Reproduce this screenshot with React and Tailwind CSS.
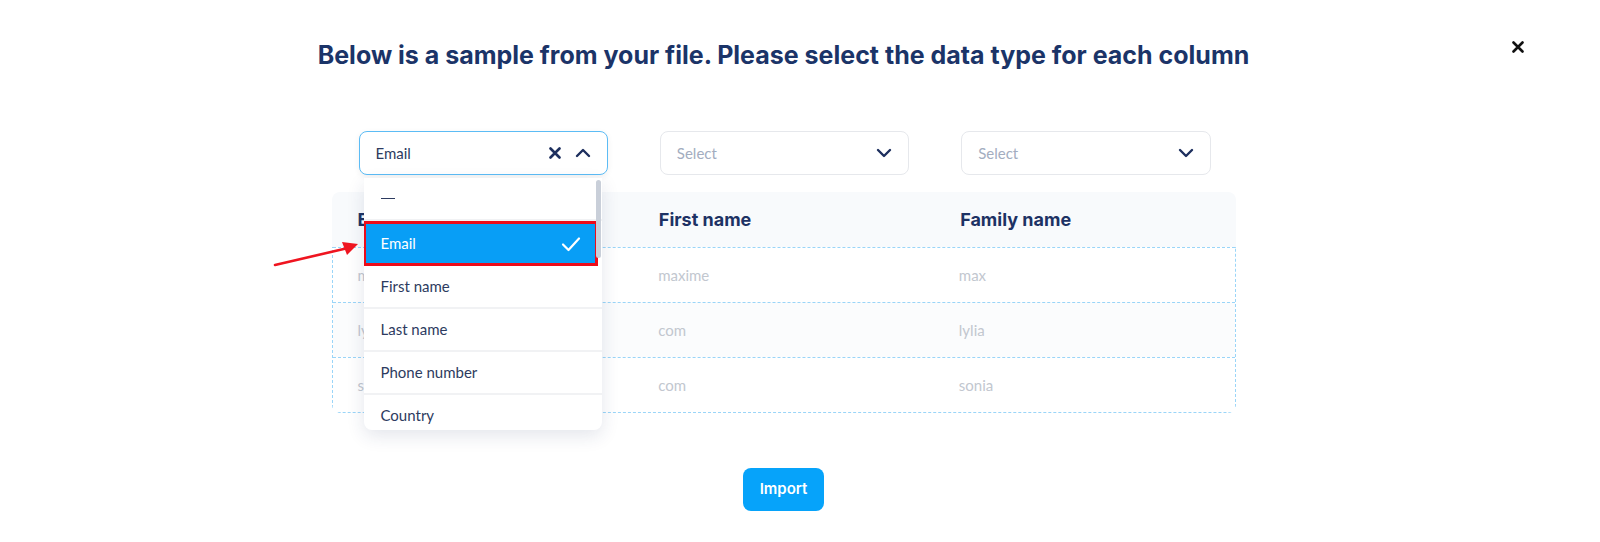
import React from 'react';

const columns = ['Email', 'First name', 'Family name'];

const rows = [
    ['maxime@gmail.com', 'maxime', 'max'],
    ['lylia@gmail.com', 'com', 'lylia'],
    ['sonia@gmail.com', 'com', 'sonia'],
];

const options = ['—', 'Email', 'First name', 'Last name', 'Phone number', 'Country'];

const ChevronDown = () => (
    <svg width="16" height="10" viewBox="0 0 16 10" fill="none">
        <path d="M2 2l6 6 6-6" stroke="#1d2f5e" strokeWidth="2.4" strokeLinecap="round" strokeLinejoin="round" />
    </svg>
);

const ChevronUp = () => (
    <svg width="16" height="10" viewBox="0 0 16 10" fill="none">
        <path d="M2 8l6-6 6 6" stroke="#1d2f5e" strokeWidth="2.4" strokeLinecap="round" strokeLinejoin="round" />
    </svg>
);

const Cross = ({ size = 12, color = '#1d2f5e', width = 2.6 }) => (
    <svg width={size} height={size} viewBox="0 0 12 12" fill="none">
        <path d="M1.5 1.5l9 9M10.5 1.5l-9 9" stroke={color} strokeWidth={width} strokeLinecap="round" />
    </svg>
);

const Check = () => (
    <svg width="20" height="16" viewBox="0 0 20 16" fill="none">
        <path d="M2 8.5l5.5 5.5L18 2.5" stroke="#ffffff" strokeWidth="2.2" strokeLinecap="round" strokeLinejoin="round" />
    </svg>
);

const Dropdown = () => (
    <div className="absolute left-[5px] top-[47px] w-[238px] h-[252px] bg-white rounded-b-lg shadow-[0_6px_18px_rgba(30,50,100,0.12)] overflow-hidden z-20">
        {options.map((opt) =>
            opt === 'Email' ? (
                <div
                    key={opt}
                    className="h-[45px] -ml-[1px] mr-[4px] border-[3px] border-[#ec0c1a] bg-[#089ef6] flex items-center justify-between pl-[15px] pr-[14px] text-white text-[15px]"
                >
                    <span>{opt}</span>
                    <Check />
                </div>
            ) : (
                <div
                    key={opt}
                    className="h-[43px] border-b-2 border-[#f1f2f4] flex items-center pl-[17px] text-[15px] text-[#2d3b60]"
                >
                    {opt === '—' ? <span className="inline-block w-[14px] h-[1.5px] bg-[#2d3b60]" /> : opt}
                </div>
            )
        )}
        <div className="absolute right-[1px] top-[2px] w-[5px] h-[78px] rounded-full bg-[#c9cfd9]" />
    </div>
);

const SelectBox = ({ value, open }) => (
    <div className="relative">
        <div
            className={
                open
                    ? 'h-[44px] rounded-lg border border-[#5cbcf5] bg-white flex items-center justify-between pl-4 pr-4 shadow-[0_2px_6px_rgba(0,0,0,0.06)]'
                    : 'h-[44px] rounded-lg border border-[#e6e8ec] bg-white flex items-center justify-between pl-4 pr-4'
            }
        >
            <span className={value ? 'text-[15px] text-[#2d3b60]' : 'text-[15px] text-[#a3adbf]'}>
                {value || 'Select'}
            </span>
            {open ? (
                <div className="flex items-center gap-[14px]">
                    <Cross />
                    <ChevronUp />
                </div>
            ) : (
                <ChevronDown />
            )}
        </div>
        {open && <Dropdown />}
    </div>
);

const App = () => {
    return (
        <div
            className="relative w-full h-[542px] bg-white overflow-hidden"
            style={{ fontFamily: 'Lato, "Open Sans", sans-serif' }}
        >
            <div className="w-[1567px]">
                <h1
                    className="pt-[38px] text-center text-[25px] leading-[34px] font-bold text-[#1b3468]"
                    style={{ fontFamily: 'Inter, sans-serif' }}
                >
                    Below is a sample from your file. Please select the data type for each column
                </h1>

                <div className="w-[904px] mx-auto mt-[59px] relative">
                    <div className="grid grid-cols-3 relative z-10">
                        {columns.map((c, i) => (
                            <div key={c} className="pl-[27px] pr-[25px]">
                                <SelectBox value={i === 0 ? 'Email' : ''} open={i === 0} />
                            </div>
                        ))}
                    </div>

                    <div className="mt-[17px]">
                        <div className="grid grid-cols-3 h-[55px] bg-[#f8fafc] rounded-t-lg items-center">
                            {columns.map((c) => (
                                <div
                                    key={c}
                                    className="pl-[26px] text-[18px] font-bold text-[#1d3264]"
                                    style={{ fontFamily: 'Inter, sans-serif' }}
                                >
                                    {c}
                                </div>
                            ))}
                        </div>
                        <div className="border border-t-0 border-dashed border-[#9ad5f8] rounded-b-lg">
                            {rows.map((r, i) => (
                                <div
                                    key={i}
                                    className={
                                        'grid grid-cols-3 h-[55px] items-center border-t border-dashed border-[#9ad5f8] ' +
                                        (i === 1 ? 'bg-[#fbfcfd]' : 'bg-white')
                                    }
                                >
                                    {r.map((v, j) => (
                                        <div key={j} className="pl-[25px] text-[15px] text-[#c2c7cf] overflow-hidden whitespace-nowrap">
                                            {v}
                                        </div>
                                    ))}
                                </div>
                            ))}
                        </div>
                    </div>

                    <div className="flex justify-center mt-[55px]">
                        <button
                            className="h-[43px] px-[17px] rounded-lg bg-[#06a3fa] text-white text-[15px] font-semibold"
                            style={{ fontFamily: 'Inter, sans-serif' }}
                        >
                            Import
                        </button>
                    </div>
                </div>
            </div>

            <button className="absolute left-[1512px] top-[41px]">
                <Cross size={12} color="#111111" width={2.6} />
            </button>

            <svg className="absolute left-[270px] top-[238px] z-30" width="95" height="32" viewBox="0 0 95 32" fill="none">
                <path d="M5 27L78 10" stroke="#ef1520" strokeWidth="2.6" strokeLinecap="round" />
                <path d="M88 6L72 4L77 17Z" fill="#ef1520" />
            </svg>
        </div>
    );
};

export default App;
